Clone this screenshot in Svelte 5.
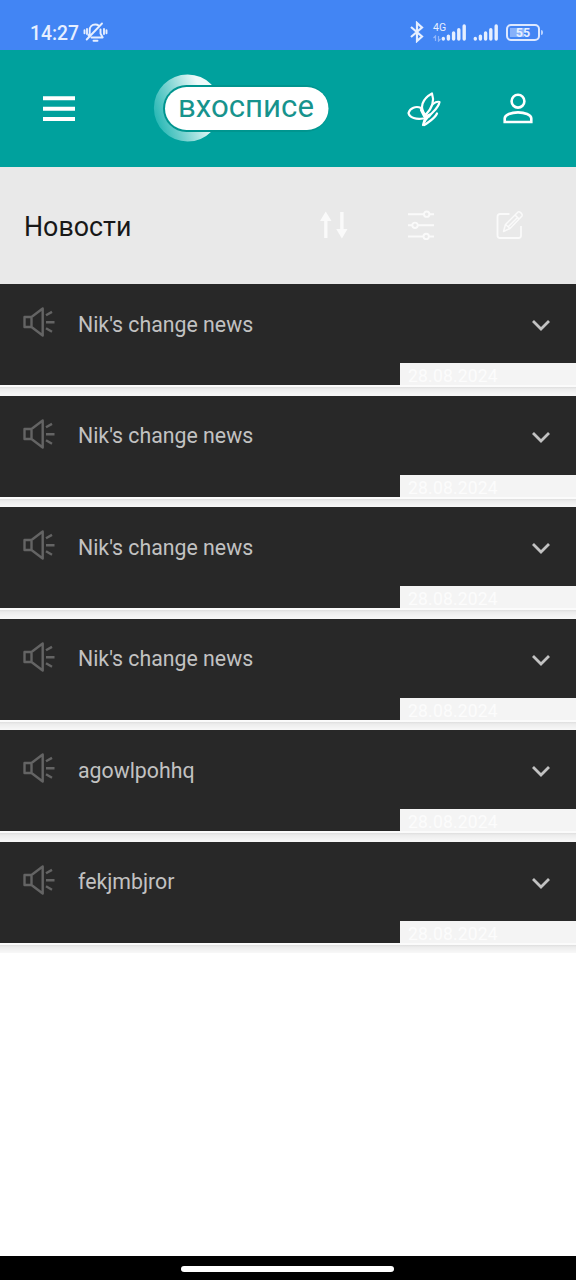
<script>
  const news = [
    "Nik's change news",
    "Nik's change news",
    "Nik's change news",
    "Nik's change news",
    'agowlpohhq',
    'fekjmbjror',
  ];
  const date = '28.08.2024';
</script>

{#snippet signal()}
  <svg class="signal" width="26" height="18" viewBox="0 0 26 18" stroke="#e6efff" stroke-width="3.4" stroke-linecap="round">
    <path d="M2.3 16v-.6M7.4 16v-2.8M12.6 16v-6M17.8 16v-9.3M23.2 16V3" />
  </svg>
{/snippet}

<div class="screen">
  <div class="status">
    <span class="clock">14:27</span>
    <svg class="bell" width="25" height="22" viewBox="0 0 25 22" fill="none" stroke="#e6efff" stroke-width="1.9" stroke-linecap="round" stroke-linejoin="round">
      <path d="M3.7 18.500 19 2.5M5.5 14.5l1.2-2V9c0-3 2-5.5 5.6-5.5 1.5 0 2.6.4 3.6 1.2M17.500 8.5v4l2.2 4H8.500M10.500 19.8h4M1.5 9.3v3M4 8v5M21 8v5M23.5 9.3v3" />
    </svg>
    <div class="spacer"></div>
    <svg class="bt" width="14" height="22" viewBox="0 0 14 22" fill="none" stroke="#e6efff" stroke-width="2.200">
      <path d="m1 6 11 9.5L7 20V2l5 4.5L1 16" />
    </svg>
    <div class="net">
      <span class="gen">4G</span>
      <svg width="9" height="7" viewBox="0 0 9 7" fill="none" stroke="#91b7fb" stroke-width="1.2">
        <path d="M2.5 6V1L.5 3M5.5 1v5l2-2" />
      </svg>
    </div>
    {@render signal()}
    <div class="gap"></div>
    {@render signal()}
    <div class="battery"><div class="charge"></div><span>55</span></div>
    <div class="cap"></div>
  </div>

  <header>
    <svg class="menu" width="32" height="26" viewBox="0 0 32 26" fill="#fff">
      <path d="M0 .3h32v4H0zM0 10.7h32v4H0zM0 21h32v4H0z" />
    </svg>
    <div class="logo">
      <svg width="176" height="70" viewBox="0 0 176 70">
        <defs>
          <linearGradient id="moon" x1="0" y1=".7" x2="1" y2=".3">
            <stop offset="0" stop-color="#1fb5b2" />
            <stop offset=".45" stop-color="#8ad8d6" />
            <stop offset=".85" stop-color="#eefafa" />
          </linearGradient>
        </defs>
        <path d="M58.500 10.500A33.600 33.600 0 1 0 58.500 57.500Z" fill="url(#moon)" />
        <rect x="10" y="11" width="166" height="47" rx="23.500" fill="#00958f" />
        <rect x="12" y="13" width="163.500" height="43" rx="21.5" fill="#fff" />
      </svg>
      <span>вхосписе</span>
    </div>
    <svg class="butterfly" width="34" height="36" viewBox="0 0 34 36" fill="none" stroke="#fff" stroke-width="2.2" stroke-linejoin="round" stroke-linecap="round">
      <path d="M18.500 24C12 17 15 8 25 2.500c2.500 7 0 15-6.500 21.500Z" />
      <path d="M14 17C9 14.500 3 17 1.500 22c1 5 8 6.500 14.500 5.500" />
      <path d="M26 13c2.500-2 5-2.500 6.500-2-1 6-6 9-10.500 14.500" />
      <path d="M30 22.500c-2 5-8 8-12.500 11.500" />
      <path d="m14 19 4 6.500 5-2-4.500 5.500-2.500 5 2-7Z" fill="#fff" />
    </svg>
    <svg class="person" width="30" height="32" viewBox="0 0 30 32" fill="none" stroke="#fff" stroke-width="2.6">
      <circle cx="15" cy="9.2" r="6.4" />
      <path d="M1.7 30V26.500c0-3.8 6.7-6.100 13.3-6.100S28.3 22.700 28.300 26.500v3.500Z" />
    </svg>
  </header>

  <div class="title">
    <h1>Новости</h1>
    <svg class="sort" width="28" height="28" viewBox="0 0 28 28" fill="#fafafa">
      <path d="M4.200 27V10H0L5.700.5 11.500 10H7.500V27ZM20.200 1v17h-4L21.900 27.500 27.500 18H23.600V1Z" />
    </svg>
    <svg class="filters" width="28" height="30" viewBox="0 0 28 30" fill="none" stroke="#fafafa" stroke-width="1.9">
      <path d="M1 4.200h16M22.500 4.200H27M1 15.300h4M11 15.300h16M1 26.500h15.500M22 26.500h5" />
      <circle cx="19.700" cy="4.200" r="2.700" /><circle cx="8" cy="15.300" r="2.700" /><circle cx="19.200" cy="26.500" r="2.700" />
    </svg>
    <svg class="edit" width="28" height="30" viewBox="0 0 28 30" fill="none" stroke="#fafafa" stroke-width="1.8" stroke-linejoin="round">
      <path d="M13.500 4H4a2.500 2.500 0 0 0-2.500 2.500v19A2.500 2.500 0 0 0 4 28h18.500a2.500 2.500 0 0 0 2.500-2.500V16" />
      <path d="m7.500 21.500 2-7L22 2c1.500-1 5 2 4 4L14 18.500ZM19 5l4.500 4.200M9.500 14.500l4.500 4M12.500 16.500 22 7" stroke-width="1.5" />
    </svg>
  </div>

  <main>
    {#each news as item}
      <article>
        <div class="card">
          <div class="row">
            <svg class="speaker" width="33" height="30" viewBox="0 0 33 30" fill="none" stroke="#646464" stroke-width="2.400" stroke-linejoin="round">
              <path d="M9.500 10H2.500v10h7M9.500 10v10L20.700 28.500V1.500ZM24 8.200l6-3.300M24 15.200h8.500M24 21.300l6 3.400" />
            </svg>
            <span class="text">{item}</span>
            <svg class="chevron" width="20" height="13" viewBox="0 0 20 13" fill="none" stroke="#c2c2c2" stroke-width="2.800">
              <path d="m2 2 8 8L18 2" />
            </svg>
          </div>
          <div class="date">{date}</div>
        </div>
        <div class="shadow"></div>
      </article>
    {/each}
  </main>

  <footer><div class="handle"></div></footer>
</div>

<style>
  .screen {
    width: 576px;
    height: 1280px;
    display: flex;
    flex-direction: column;
    overflow: hidden;
    background: #fff;
    font-family: Roboto, sans-serif;
  }
  svg { display: block; flex: none; }
  .status {
    height: 50px;
    flex: none;
    box-sizing: border-box;
    padding: 15px 34px 0 30px;
    display: flex;
    align-items: center;
    background: #4285f4;
    color: #e6efff;
  }
  .clock { font-size: 19.300px; font-weight: 500; width: 53px; margin-top: 2px; white-space: nowrap; }
  .bell { margin-top: -1px; }
  .spacer { flex: 1; }
  .bt { margin: -2px 9px 0 0; }
  .net { width: 8px; height: 20px; margin-top: -2px; display: flex; flex-direction: column; justify-content: space-between; }
  .gen { font-size: 10.500px; line-height: 12px; }
  .signal { margin-bottom: 1px; }
  .gap { width: 6px; }
  .battery {
    position: relative;
    box-sizing: border-box;
    width: 34px;
    height: 17px;
    margin: -1px 0 0 7px;
    border: 2px solid #dce8ff;
    border-radius: 5px;
    font-size: 12.500px;
    font-weight: 700;
    line-height: 13.500px;
    text-align: center;
    overflow: hidden;
  }
  .battery span { position: relative; }
  .charge { position: absolute; left: 2px; top: 2px; width: 14px; height: 9px; background: #87b1fa; }
  .cap { width: 2px; height: 5px; background: #b9d2ff; margin: 0 -1px 0 1px; border-radius: 0 2px 2px 0; }

  header {
    height: 117px;
    flex: none;
    display: flex;
    align-items: center;
    background: #00a19d;
  }
  .menu { margin-left: 43px; }
  .logo { margin-left: 78px; width: 176px; height: 70px; display: grid; }
  .logo > * { grid-area: 1 / 1; }
  .logo svg { overflow: visible; }
  .logo span {
    padding: 14px 0 0 25px;
    font-size: 31.200px;
    line-height: 37px;
    color: #17938d;
    white-space: nowrap;
  }
  .butterfly { margin-left: 78px; }
  .person { margin: 0 0 1px 61.500px; }

  .title {
    height: 117px;
    flex: none;
    display: flex;
    align-items: center;
    background: #e9e9e9;
  }
  h1 {
    width: 296px;
    margin: 3px 0 0 24px;
    font-size: 26.800px;
    font-weight: 400;
    color: #181818;
  }
  .sort, .filters { margin-bottom: 1px; }
  .filters { margin-left: 59px; }
  .edit { margin-left: 61px; margin-bottom: 2px; }

  main { flex: 1; }
  article { height: 111.500px; }
  .card {
    height: 101px;
    background: #282828;
    display: flex;
    flex-direction: column;
    justify-content: space-between;
  }
  .row { height: 79px; display: flex; align-items: center; }
  .speaker { margin: 0 0 3px 22px; }
  .text { flex: 1; margin: 1px 0 0 23px; font-size: 21.300px; color: #c2c2c2; }
  .chevron { margin: 4px 25px 0 0; }
  .date {
    align-self: flex-end;
    box-sizing: border-box;
    width: 176px;
    height: 22px;
    padding: 2px 0 0 8px;
    background: #f4f4f4;
    color: #fcfcfc;
    font-size: 17.500px;
    line-height: 22px;
    letter-spacing: .2px;
  }
  .shadow {
    height: 10.500px;
    background: linear-gradient(#fbfbfb 0 2px, #dedede 2px, #ececec 4px, #f4f4f4 8px, #f8f8f8);
  }
  footer {
    height: 24px;
    flex: none;
    display: flex;
    align-items: center;
    justify-content: center;
    background: #000;
  }
  .handle { width: 213px; height: 6px; border-radius: 3px; background: #fff; margin: 1px 0 0 -1px; }
</style>
